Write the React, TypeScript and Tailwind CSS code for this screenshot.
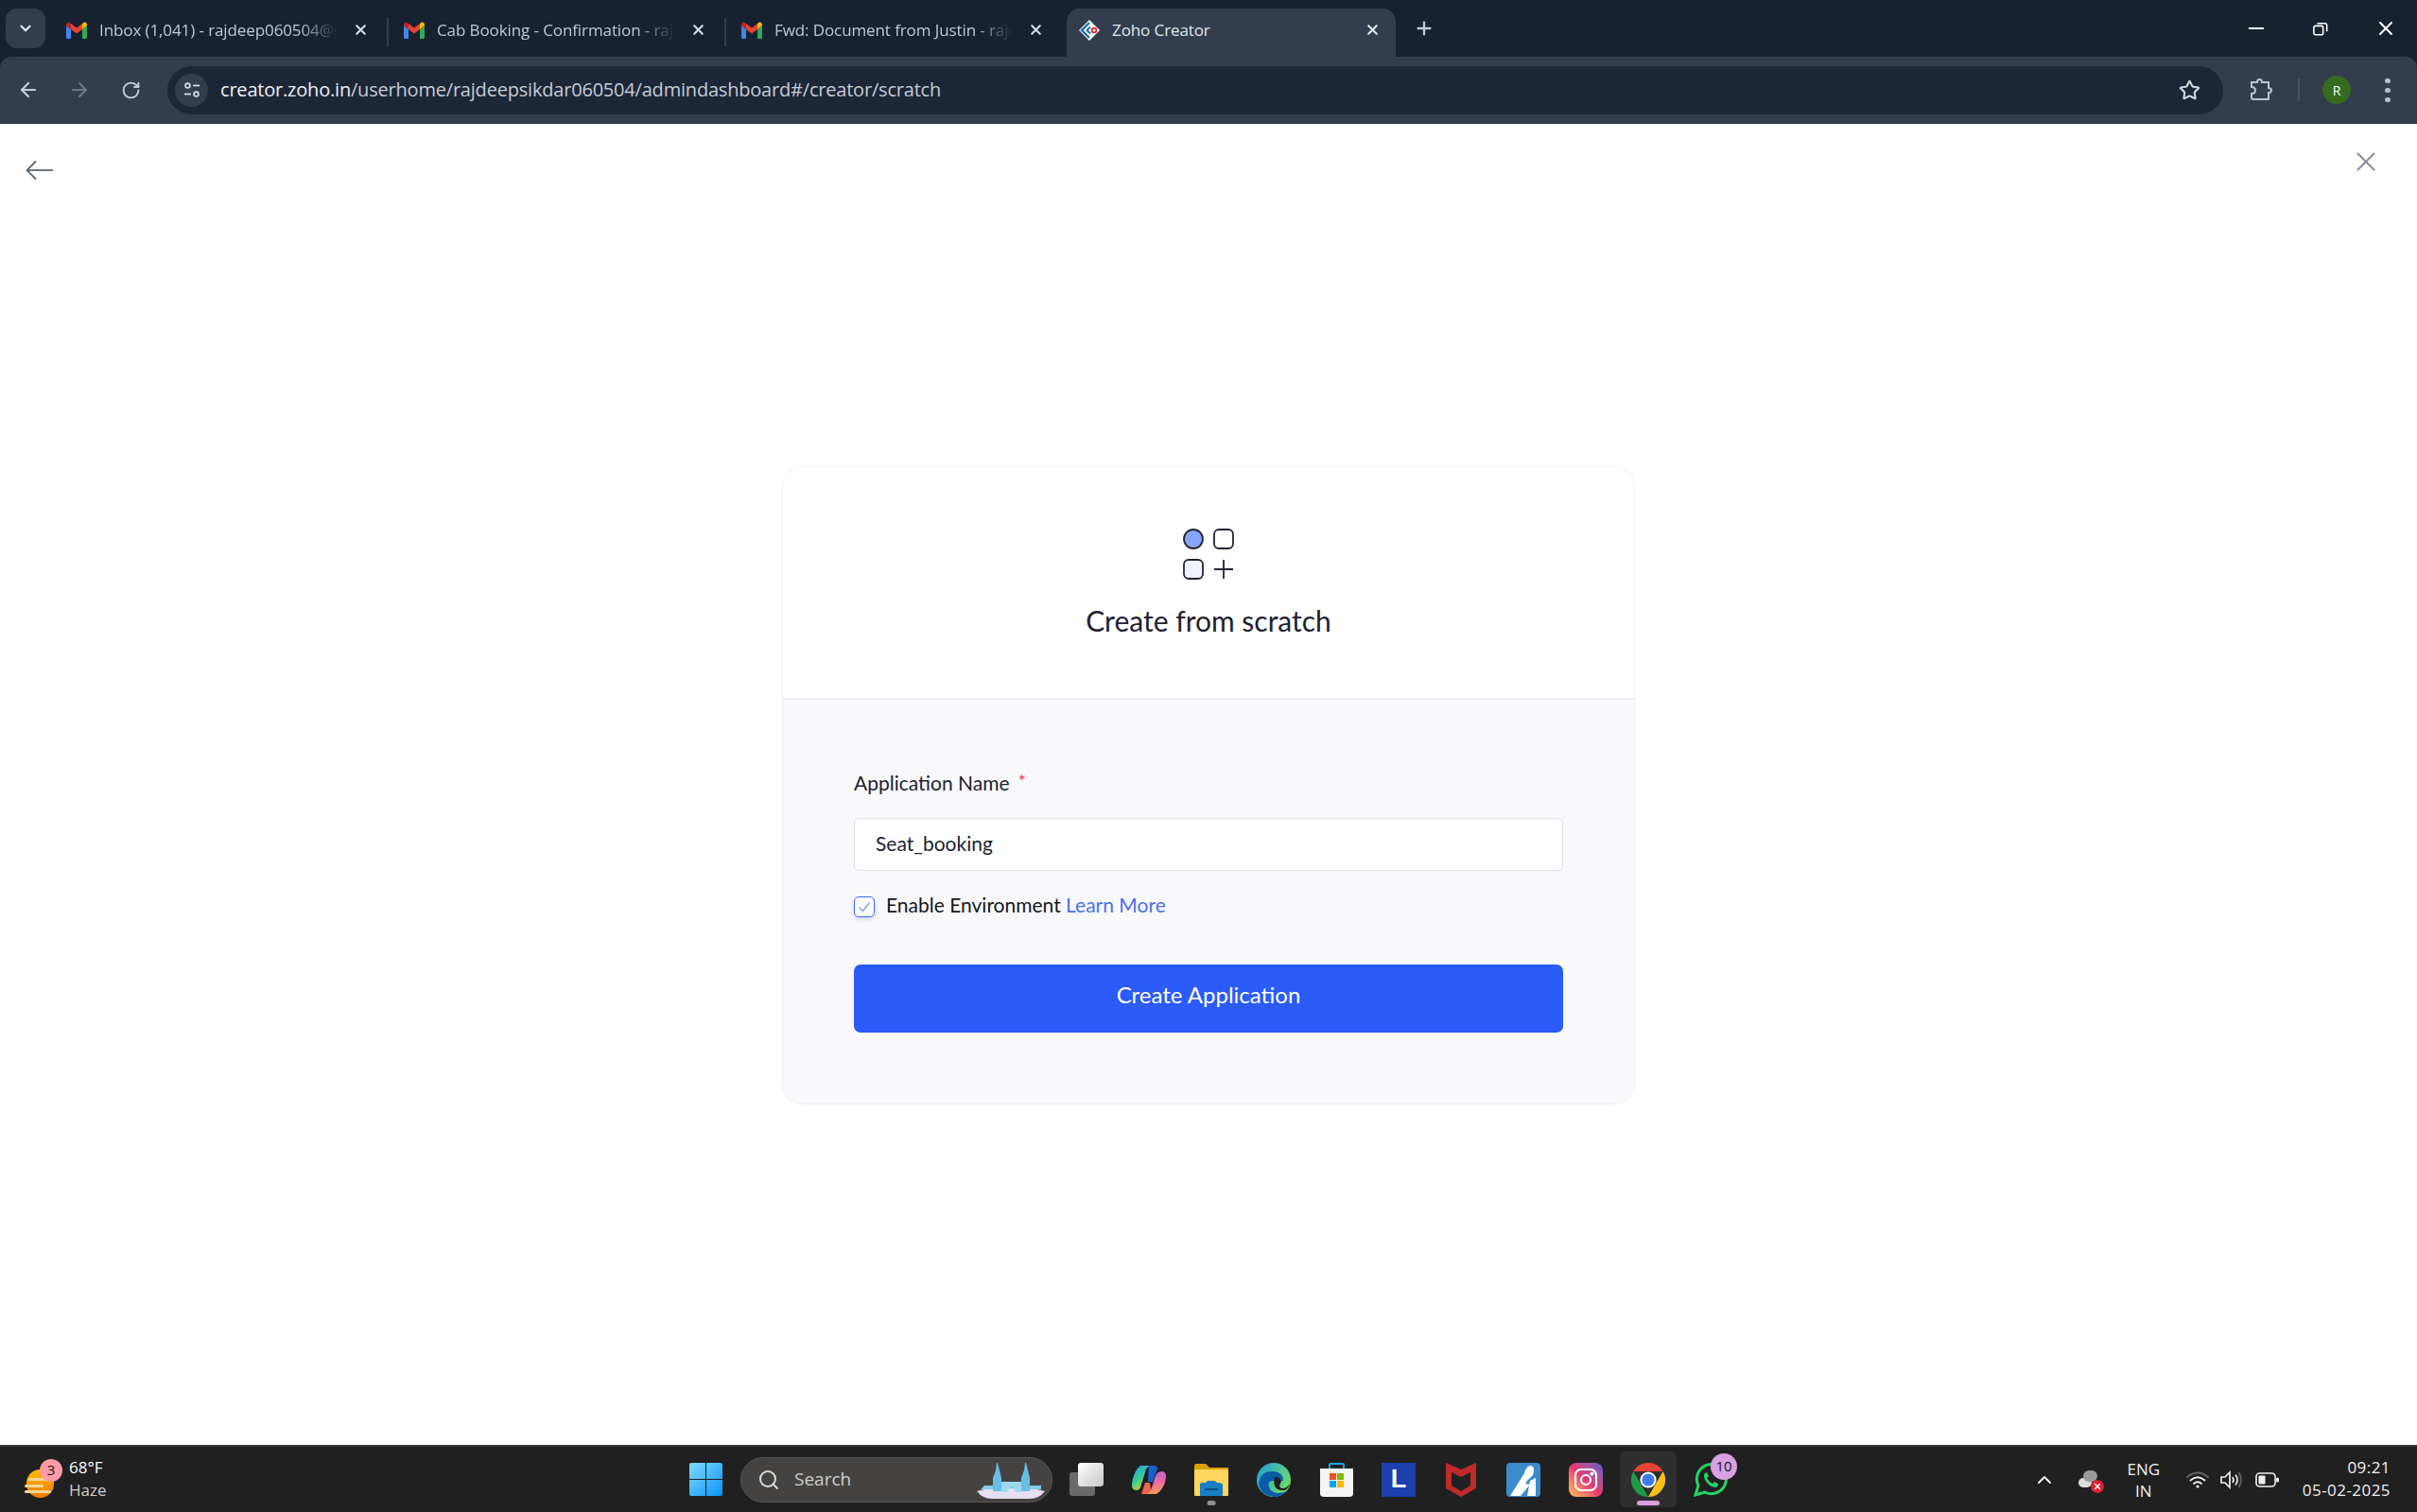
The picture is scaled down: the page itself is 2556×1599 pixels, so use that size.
import React from "react";
import { ArrowLeft, ArrowRight, ChevronDown, ChevronUp, Plus, RotateCw, Search, Star, X } from "lucide-react";

const uiFont = "font-['Open_Sans','Noto_Sans',sans-serif]";

function GmailIcon() {
    return (
        <svg width="22" height="18" viewBox="0 0 22 18" className="shrink-0">
            <path d="M0 4 V16.5 Q0 18 1.5 18 H5 V8 Z" fill="#4285f4" />
            <path d="M22 4 V16.5 Q22 18 20.5 18 H17 V8 Z" fill="#34a853" />
            <path d="M5 8 L11 12.5 L17 8 V2 L11 6.5 L5 2 Z" fill="#ea4335" />
            <path d="M0 4 Q0 0 3 0.5 L5 2 V8 Z" fill="#c5221f" />
            <path d="M22 4 Q22 0 19 0.5 L17 2 V8 Z" fill="#fbbc04" />
        </svg>
    );
}

function ZohoIcon() {
    return (
        <svg width="24" height="24" viewBox="0 0 24 24" className="shrink-0">
            <path d="M12 1 L23 12 L12 23 L1 12 Z" fill="#fff" />
            <path d="M12 4 L4 12 L12 20" fill="none" stroke="#1b6ac0" strokeWidth="2.4" />
            <path d="M13 8.5 L9.5 12 L13 15.5" fill="none" stroke="#1b6ac0" strokeWidth="2" />
            <circle cx="17" cy="12" r="2.4" fill="none" stroke="#e42527" strokeWidth="1.8" />
        </svg>
    );
}

function Tab({ title, divider }: { title: string; divider?: boolean }) {
    return (
        <div className="w-[357px] h-[51px] flex items-center pl-[16px] pr-[20px] pb-[6px] relative">
            <GmailIcon />
            <div className="ml-[13px] w-[252px] overflow-hidden whitespace-nowrap text-[17px] tracking-[-0.1px] text-[#c3c9d2] [mask-image:linear-gradient(to_right,black_84%,transparent_100%)]">
                {title}
            </div>
            <X size={17} strokeWidth={3} className="ml-auto text-[#d5dae2] -translate-x-[1px]" />
            {divider && <div className="absolute right-0 top-[10px] w-[2px] h-[30px] bg-[#333d4e]" />}
        </div>
    );
}

function TabStrip() {
    return (
        <div className="h-[60px] shrink-0 bg-[#182130] flex items-end">
            <div className="w-[42px] h-[42px] ml-[6px] mb-[9px] rounded-[12px] bg-[#333d4e] flex items-center justify-center">
                <ChevronDown size={18} strokeWidth={3} className="text-[#e3e7ec]" />
            </div>
            <div className="flex ml-[6px]">
                <Tab title="Inbox (1,041) - rajdeep060504@gmail.com" divider />
                <Tab title="Cab Booking - Confirmation - rajdeep" divider />
                <Tab title="Fwd: Document from Justin - rajdeep" />
            </div>
            <div className="w-[348px] h-[51px] ml-[3px] rounded-t-[14px] bg-[#333d4e] flex items-center pl-[12px] pr-[16px] pb-[6px]">
                <ZohoIcon />
                <span className="ml-[12px] text-[17px] tracking-[-0.1px] text-[#e4e7ec] whitespace-nowrap">Zoho Creator</span>
                <X size={17} strokeWidth={3} className="ml-auto text-[#e3e7ec]" />
            </div>
            <div className="ml-[19px] mb-[9px] h-[42px] flex items-center">
                <Plus size={22} strokeWidth={2.5} className="text-[#c5cbd6]" />
            </div>
            <div className="ml-auto mb-[9px] h-[42px] flex items-center pr-[21px] text-white">
                <div className="w-[16px] h-[2.5px] bg-white" />
                <svg width="16" height="15" viewBox="0 0 18 16" fill="none" stroke="#fff" strokeWidth="1.8" className="ml-[52px]">
                    <rect x="1" y="4.5" width="11" height="10.5" rx="2" />
                    <path d="M5 1.5 H14 Q16.5 1.5 16.5 4 V11" />
                </svg>
                <X size={24} strokeWidth={2} className="ml-[49px]" />
            </div>
        </div>
    );
}

function Toolbar() {
    return (
        <div className="h-[71px] shrink-0 bg-[#182130]">
            <div className="h-full bg-[#333d4e] border-b-[1px] border-[#2a3341] rounded-t-[12px] flex items-center">
                <ArrowLeft size={24} strokeWidth={2.2} className="ml-[18px] text-[#c8ced8]" />
                <ArrowRight size={24} strokeWidth={2.2} className="ml-[30px] text-[#6f7887]" />
                <RotateCw size={21} strokeWidth={2.2} className="ml-[32px] text-[#c8ced8]" />
                <div className="ml-[28px] w-[2174px] h-[51px] rounded-full bg-[#1d2636] flex items-center pl-[8px] pr-[24px]">
                    <div className="w-[35px] h-[35px] rounded-full bg-[#333d4e] flex items-center justify-center">
                        <svg width="18" height="18" viewBox="0 0 18 18" fill="none" stroke="#d6dbe3" strokeWidth="1.8">
                            <circle cx="4.5" cy="4.5" r="2.4" />
                            <path d="M10 4.5 H17" />
                            <path d="M1 13.5 H8" />
                            <circle cx="13.5" cy="13.5" r="2.4" />
                        </svg>
                    </div>
                    <div className="ml-[13px] text-[20px] tracking-[-0.2px] text-[#c6ccd6] whitespace-nowrap">
                        <span className="text-[#eef0f4]">creator.zoho.in</span>/userhome/rajdeepsikdar060504/admindashboard#/creator/scratch
                    </div>
                    <Star size={23} strokeWidth={2.2} className="ml-auto text-[#d2d7df]" />
                </div>
                <svg width="24" height="26" viewBox="0 0 24 26" fill="none" stroke="#bcc4d2" strokeWidth="2" className="ml-[28px]">
                    <path d="M2 5 H8 Q8 2 10.5 2 Q13 2 13 5 H20 V11 Q23 11 23 13.5 Q23 16 20 16 V23 H4 Q2 23 2 21 V17 Q6 17 6 13.5 Q6 10 2 10 Z" />
                </svg>
                <div className="ml-[27px] w-[2px] h-[24px] bg-[#4a5466] rounded" />
                <div className="ml-[24px] w-[30px] h-[30px] rounded-full bg-[#356b1e] flex items-center justify-center text-[14px] text-white">
                    R
                </div>
                <div className="ml-[36px] flex flex-col gap-[5px]">
                    <div className="w-[6px] h-[5px] rounded-full bg-[#b9c1cf]" />
                    <div className="w-[6px] h-[5px] rounded-full bg-[#b9c1cf]" />
                    <div className="w-[6px] h-[5px] rounded-full bg-[#b9c1cf]" />
                </div>
            </div>
        </div>
    );
}

function ScratchCard() {
    return (
        <div className="w-[902px] h-[675px] rounded-[22px] border-[1px] border-[#eeeef5] overflow-hidden flex flex-col font-['Lato',sans-serif]">
            <div className="h-[246px] bg-white border-b-[2px] border-[#eeeef5] flex flex-col items-center pt-[64px] shrink-0">
                <svg width="56" height="56" viewBox="0 0 56 56" fill="none" stroke="#22252e" strokeWidth="1.8">
                    <circle cx="12" cy="12" r="10" fill="#86a5fb" />
                    <rect x="34" y="2" width="20" height="20" rx="5" fill="#fff" />
                    <rect x="2" y="34" width="20" height="20" rx="5" fill="#f0f2fd" />
                    <path d="M44 34 V54 M34 44 H54" />
                </svg>
                <div className="mt-[23px] text-[30px] leading-[38px] text-[#1d2230]">Create from scratch</div>
            </div>
            <div className="flex-1 bg-[#f9f9fc] px-[75px] pt-[74px]">
                <div className="flex items-start text-[21px] leading-[28px] text-[#1d2230]">
                    Application Name
                    <span className="ml-[9px] text-[20px] leading-[22px] text-[#f0474b]">*</span>
                </div>
                <div className="mt-[23px] h-[56px] bg-white border-[1px] border-[#dfe0e8] rounded-[5px] flex items-center pl-[22px] pb-[2px] text-[21px] text-[#1d2230]">
                    Seat_booking
                </div>
                <div className="mt-[27px] flex items-center h-[22px]">
                    <div className="w-[22px] h-[22px] rounded-[5px] border-[1.5px] border-[#3d68f0] bg-white flex items-center justify-center shadow-[0_2px_4px_rgba(61,104,240,0.25)]">
                        <svg width="14" height="12" viewBox="0 0 14 12" fill="none" stroke="#7d9bf2" strokeWidth="1.4">
                            <path d="M1.5 6.5 L5.5 10.5 L12.5 1.5" />
                        </svg>
                    </div>
                    <div className="ml-[12px] text-[21px] leading-[26px] text-[#14171f] -translate-y-[2px]">
                        Enable Environment <span className="text-[#4770ef]">Learn More</span>
                    </div>
                </div>
                <div className="mt-[50px] h-[72px] rounded-[7px] bg-[#2b5bf9] flex items-center justify-center pb-[9px] text-[24px] text-white">
                    Create Application
                </div>
            </div>
        </div>
    );
}

function AppSlot({ children, active, dot, wide }: { children: React.ReactNode; active?: boolean; dot?: string; wide?: boolean }) {
    return (
        <div
            className={
                active
                    ? "w-[60px] h-[59px] relative flex items-center justify-center rounded-[6px] bg-[#2e2e2e] mx-[3px]"
                    : "w-[66px] h-[59px] relative flex items-center justify-center"
            }
        >
            {children}
            {dot && (
                <div
                    className={
                        wide
                            ? "absolute bottom-[2px] left-1/2 -translate-x-1/2 w-[24px] h-[5px] rounded-full"
                            : "absolute bottom-[2px] left-1/2 -translate-x-1/2 w-[9px] h-[5px] rounded-full"
                    }
                    style={{ backgroundColor: dot }}
                />
            )}
        </div>
    );
}

function Taskbar() {
    return (
        <div className="h-[71px] shrink-0 bg-[#202020] border-t-[2px] border-[#383838] flex items-center text-white">
            {/* weather */}
            <div className="w-[729px] h-full flex items-center pl-[26px] shrink-0">
                <div className="relative w-[33px] h-[30px] mt-[9px]">
                    <div className="absolute left-[2px] top-0 w-[29px] h-[30px] rounded-full bg-gradient-to-b from-[#ffbb00] to-[#ee7a00]" />
                    <div className="absolute left-[4px] top-[9px] w-[26px] h-[3px] rounded bg-[#f6d899]" />
                    <div className="absolute left-0 top-[16px] w-[20px] h-[3px] rounded bg-[#f6d899]" />
                    <div className="absolute left-0 top-[22px] w-[28px] h-[3px] rounded bg-[#f6d899]" />
                    <div className="absolute left-[16px] top-[-11px] w-[24px] h-[24px] rounded-full bg-[#ff9ba6] text-[#151515] text-[15px] leading-[22px] text-center">
                        3
                    </div>
                </div>
                <div className="ml-[14px] text-[17px] leading-[24px] -translate-y-[1px]">
                    <div>68°F</div>
                    <div className="text-[#cfcfcf]">Haze</div>
                </div>
            </div>

            <svg width="35" height="35" viewBox="0 0 35 35" className="shrink-0">
                <defs>
                    <linearGradient id="win" x1="0" y1="0" x2="1" y2="1">
                        <stop offset="0" stopColor="#7fdcff" />
                        <stop offset="1" stopColor="#0a93f5" />
                    </linearGradient>
                </defs>
                <path d="M2 0 H17 V17 H0 V2 Q0 0 2 0 Z M18 0 H33 Q35 0 35 2 V17 H18 Z M0 18 H17 V35 H2 Q0 35 0 33 Z M18 18 H35 V33 Q35 35 33 35 H18 Z" fill="url(#win)" />
            </svg>

            <div className="ml-[19px] w-[330px] h-[48px] rounded-full bg-[#454341] border-[1px] border-[#5a5856] flex items-center pl-[17px] relative shrink-0">
                <Search size={24} strokeWidth={2} className="text-[#dcdcdc]" />
                <span className="ml-[15px] text-[19px] text-[#cfcfcf]">Search</span>
                <svg width="72" height="38" viewBox="0 0 72 38" className="absolute right-[7px] bottom-[3px]">
                    <path d="M0 30 L12 27 H60 L72 30 Q66 38 56 38 H16 Q6 38 0 30 Z" fill="#e6dff0" />
                    <path d="M20 8 L21 0 L22 0 L26 16 V30 H17 V16 Z M50 8 L51 0 L52 0 L56 16 V30 H47 V16 Z" fill="#67bde3" />
                    <path d="M26 20 H47 V31 H41 Q37 22 32 31 H26 Z" fill="#9bd8f0" />
                    <path d="M4 28 H17 V24 H8 Z M56 24 H68 V28 H56 Z" fill="#7fcbea" />
                </svg>
            </div>

            <div className="ml-[18px] w-[36px] h-[35px] relative shrink-0">
                <div className="absolute left-0 bottom-0 w-[27px] h-[25px] rounded-[3px] bg-[#6a6a6a]" />
                <div className="absolute right-0 top-0 w-[27px] h-[25px] rounded-[3px] bg-gradient-to-br from-white to-[#c8c8c8]" />
            </div>

            <div className="ml-[15px] flex items-center">
                <AppSlot>
                    <svg width="36" height="32" viewBox="0 0 36 32">
                        <defs>
                            <linearGradient id="copA" x1="0" y1="0" x2="0.6" y2="1">
                                <stop offset="0" stopColor="#1f9cf0" />
                                <stop offset="0.55" stopColor="#3ecf8e" />
                                <stop offset="1" stopColor="#f0c419" />
                            </linearGradient>
                            <linearGradient id="copB" x1="0.3" y1="0" x2="0.6" y2="1">
                                <stop offset="0" stopColor="#b65be0" />
                                <stop offset="0.55" stopColor="#ee6a9f" />
                                <stop offset="1" stopColor="#f6a04d" />
                            </linearGradient>
                        </defs>
                        <path d="M9 1 H25 L18 2 Q15 3 14 8 L9 24 Q8 27 5 27 Q0 27 0 22 V20 Q2 6 9 1 Z" fill="url(#copA)" />
                        <path d="M18 1 H24 Q27 1 27 4 L22 18 H17 Z" fill="#1a5fd0" />
                        <path d="M17 7 H31 Q36 7 36 12 V14 Q34 26 26 31 H10 L17 29 Q20 28 21 24 L25 12 Q26 8 31 7 Z" fill="url(#copB)" />
                        <path d="M10 31 L14 19 H19 L20 26 Q19 30 15 31 Z" fill="#f0654d" />
                    </svg>
                </AppSlot>
                <AppSlot dot="#8f8f8f">
                    <svg width="36" height="34" viewBox="0 0 36 34">
                        <path d="M0 2 Q0 0 2 0 H12 L16 4 H36 V12 H0 Z" fill="#d9a008" />
                        <path d="M0 6 H36 V33 Q36 34 35 34 H1 Q0 34 0 33 Z" fill="#ffd65c" />
                        <path d="M6 34 V22 Q6 20 8 20 H12 L14 18 H22 L24 20 Q30 20 30 22 V34 Z" fill="#1a7ec4" />
                        <path d="M11 27 H25" stroke="#0c4a80" strokeWidth="2" />
                    </svg>
                </AppSlot>
                <AppSlot>
                    <svg width="36" height="36" viewBox="0 0 36 36">
                        <defs>
                            <linearGradient id="edge" x1="0" y1="0" x2="1" y2="0.6">
                                <stop offset="0" stopColor="#1b9de2" />
                                <stop offset="1" stopColor="#6fdc6a" />
                            </linearGradient>
                        </defs>
                        <circle cx="18" cy="18" r="18" fill="url(#edge)" />
                        <path d="M2 22 Q4 8 18 9 Q28 10 28 19 H16 Q10 20 14 28 Q20 35 32 30 Q26 36 18 36 Q4 34 2 22 Z" fill="#0d5aa7" />
                        <path d="M19 15 Q25 15 26 20 Q22 26 27 27 Q32 27 35 22 Q33 30 26 29 Q16 28 19 15 Z" fill="#202020" />
                    </svg>
                </AppSlot>
                <AppSlot>
                    <svg width="35" height="36" viewBox="0 0 35 36">
                        <path d="M10 7 V2 Q10 1 11 1 H24 Q25 1 25 2 V7" fill="none" stroke="#1aa7ec" strokeWidth="2" />
                        <path d="M0 6 H35 V32 Q35 36 31 36 H4 Q0 36 0 32 Z" fill="#f4f4f4" />
                        <rect x="10" y="11" width="7" height="7" fill="#f25022" />
                        <rect x="18" y="11" width="7" height="7" fill="#7fba00" />
                        <rect x="10" y="19" width="7" height="7" fill="#00a4ef" />
                        <rect x="18" y="19" width="7" height="7" fill="#ffb900" />
                    </svg>
                </AppSlot>
                <AppSlot>
                    <div className="w-[36px] h-[36px] bg-[#1e3fae] flex items-center justify-center text-[27px] font-bold text-white font-['Liberation_Sans',sans-serif]">
                        L
                    </div>
                </AppSlot>
                <AppSlot>
                    <svg width="32" height="36" viewBox="0 0 32 36" fill="#c02a2a">
                        <path d="M0 0 L16 7 L32 0 V27 L16 36 L0 27 Z M6 10 V24 L16 30 L26 24 V10 L16 15 Z" />
                    </svg>
                </AppSlot>
                <AppSlot>
                    <div className="w-[36px] h-[36px] rounded-[4px] bg-[#3a8bcc] flex items-end justify-center overflow-hidden">
                        <svg width="34" height="34" viewBox="0 0 34 34" fill="#fff">
                            <path d="M3 33 L18 9 Q20 1 25 1 Q30 2 27 11 L21 17 L19 20 L24 21 L14 33 Z" />
                            <path d="M24 17 L30 14 V33 H21 Z" />
                        </svg>
                    </div>
                </AppSlot>
                <AppSlot>
                    <div className="w-[36px] h-[36px] rounded-[8px] bg-gradient-to-tr from-[#fdc04f] via-[#e5336f] to-[#5b52cf] flex items-center justify-center">
                        <svg width="26" height="26" viewBox="0 0 26 26" fill="none" stroke="#fff" strokeWidth="2.2">
                            <rect x="2" y="2" width="22" height="22" rx="6" />
                            <circle cx="13" cy="13" r="5" />
                            <circle cx="19.5" cy="6.5" r="1" fill="#fff" />
                        </svg>
                    </div>
                </AppSlot>
                <AppSlot active dot="#d9a0e0" wide>
                    <svg width="36" height="36" viewBox="0 0 36 36">
                        <path d="M18 0 A18 18 0 0 1 33.6 9 H18 Z M2.4 9 A18 18 0 0 1 18 0 V9 Z" fill="#ea4335" />
                        <path d="M2.4 9 L11 24 L18 36 A18 18 0 0 1 2.4 9 Z" fill="#1f9b4a" />
                        <path d="M33.6 9 A18 18 0 0 1 18 36 L26 22 Z" fill="#fbc116" />
                        <circle cx="18" cy="18" r="8.6" fill="#fff" />
                        <circle cx="18" cy="18" r="6.6" fill="#3f7de8" />
                    </svg>
                </AppSlot>
                <AppSlot>
                    <div className="relative w-[36px] h-[36px]">
                        <svg width="36" height="36" viewBox="0 0 36 36" fill="none">
                            <path d="M2 34 L5 24 A15.5 15.5 0 1 1 12 31 Z" stroke="#25d366" strokeWidth="3" />
                            <path d="M12 11 Q10 13 12 18 Q16 25 23 26 Q26 26 26 22 L22 20 L20 22 Q16 20 14 16 L16 14 L14 10 Z" fill="#25d366" />
                        </svg>
                        <div className="absolute left-[18px] top-[-10px] w-[28px] h-[28px] rounded-full bg-[#d9a0e0] text-[#151515] text-[15px] leading-[27px] text-center">
                            10
                        </div>
                    </div>
                </AppSlot>
            </div>

            {/* system tray */}
            <div className="ml-auto flex items-center pr-[28px] h-full">
                <ChevronUp size={24} strokeWidth={2} className="text-[#f0f0f0]" />
                <div className="ml-[24px] relative w-[24px] h-[20px]">
                    <div className="absolute left-0 bottom-[2px] w-[14px] h-[10px] rounded-full bg-[#dcdcdc]" />
                    <div className="absolute left-[5px] top-0 w-[15px] h-[12px] rounded-full bg-[#9a9a9a]" />
                    <div className="absolute right-[-3px] bottom-[-4px] w-[14px] h-[14px] rounded-full bg-[#d81f2f] text-white flex items-center justify-center">
                        <X size={10} strokeWidth={3.5} />
                    </div>
                </div>
                <div className="ml-[23px] w-[44px] text-center text-[17px] leading-[23px] text-[#f0f0f0]">
                    <div>ENG</div>
                    <div>IN</div>
                </div>
                <svg width="24" height="18" viewBox="0 0 24 18" fill="none" strokeWidth="1.8" strokeLinecap="round" className="ml-[23px]">
                    <path d="M1 6 Q12 -3 23 6" stroke="#666" />
                    <path d="M4.5 9.5 Q12 3 19.5 9.5" stroke="#f0f0f0" />
                    <path d="M8 13 Q12 9.5 16 13" stroke="#f0f0f0" />
                    <circle cx="12" cy="16" r="1.6" fill="#f0f0f0" stroke="none" />
                </svg>
                <svg width="24" height="20" viewBox="0 0 24 20" fill="none" stroke="#f0f0f0" strokeWidth="1.7" className="ml-[12px]">
                    <path d="M1 7 H5 L10 2 V18 L5 13 H1 Z" />
                    <path d="M13 7 Q15 10 13 13" />
                    <path d="M16 4.5 Q20 10 16 15.5" />
                    <path d="M19.5 2 Q24 10 19.5 18" stroke="#666" />
                </svg>
                <svg width="25" height="16" viewBox="0 0 25 16" fill="none" className="ml-[13px]">
                    <rect x="1" y="1" width="20" height="14" rx="3.5" stroke="#f0f0f0" strokeWidth="1.6" />
                    <rect x="3.5" y="3.5" width="7" height="9" rx="1" fill="#f0f0f0" />
                    <rect x="22" y="5.5" width="3" height="5" rx="1.5" fill="#f0f0f0" />
                </svg>
                <div className="ml-[25px] text-right text-[17px] tracking-[0.45px] leading-[24px] text-[#f0f0f0] -translate-y-[1px]">
                    <div>09:21</div>
                    <div>05-02-2025</div>
                </div>
            </div>
        </div>
    );
}

function BackArrow() {
    return (
        <svg width="30" height="22" viewBox="0 0 30 22" fill="none" stroke="#5f6678" strokeWidth="1.8" className="absolute left-[27px] top-[38px]">
            <path d="M29 11 H2" />
            <path d="M11 1.5 L1.5 11 L11 20.5" />
        </svg>
    );
}

export default function App() {
    return (
        <div className={`h-screen flex flex-col overflow-hidden bg-white ${uiFont}`}>
            <TabStrip />
            <Toolbar />
            <main className="flex-1 relative flex items-center justify-center pt-[2px]">
                <BackArrow />
                <X size={34} strokeWidth={1.5} className="absolute right-[37px] top-[23px] text-[#8a8f9e]" />
                <ScratchCard />
            </main>
            <Taskbar />
        </div>
    );
}
